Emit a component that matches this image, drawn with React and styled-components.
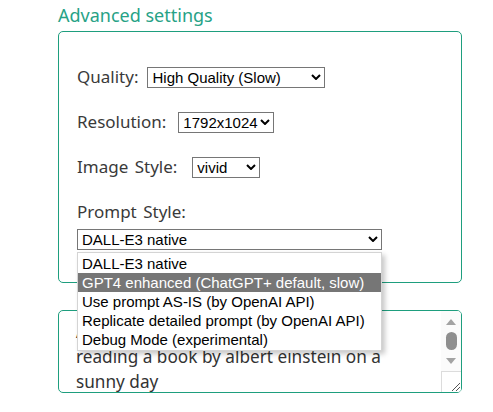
import React from "react";
import styled, { createGlobalStyle } from "styled-components";

const GlobalStyle = createGlobalStyle`
  html, body {
    margin: 0;
    padding: 0;
    background: #ffffff;
  }
  body {
    font-family: "Noto Sans", Inter, sans-serif;
  }
`;

const Page = styled.div`
  padding: 4px 0 0 58px;
  width: 404px;
`;

const Title = styled.h3`
  margin: 0 0 5px;
  font-size: 18px;
  line-height: 22px;
  font-weight: 400;
  color: #27a286;
`;

const Panel = styled.div`
  border: 1px solid #1e9e7e;
  border-radius: 5px;
  padding: 34px 18px 33px;
  display: flex;
  flex-direction: column;
  gap: 24px;
`;

const Row = styled.div`
  display: flex;
  align-items: center;
  height: 21px;
  gap: ${(p) => p.gap || 9}px;
`;

const Stack = styled.div`
  display: flex;
  flex-direction: column;
  gap: 6px;
`;

const Label = styled.label`
  font-size: 17px;
  line-height: 21px;
  word-spacing: 2px;
  color: #3a3a3a;
  white-space: nowrap;
`;

const SelectWrap = styled.div`
  position: relative;
  width: ${(p) => p.width}px;
  height: 21px;
`;

const NativeSelect = styled.select`
  appearance: none;
  -webkit-appearance: none;
  box-sizing: border-box;
  width: 100%;
  height: 100%;
  margin: 0;
  padding: 0 14px 0 4px;
  border: 1px solid #767676;
  border-radius: 0;
  background: #ffffff;
  font-family: "Liberation Sans", Arial, sans-serif;
  font-size: 15px;
  color: #000000;
  outline: none;
`;

const Chevron = styled.svg`
  position: absolute;
  right: 4px;
  top: 8px;
  pointer-events: none;
`;

const Dropdown = styled.ul`
  position: absolute;
  left: 0;
  top: 24px;
  box-sizing: border-box;
  width: 100%;
  margin: 0;
  padding: 1px 0;
  list-style: none;
  background: #ffffff;
  border: 1px solid #d4d4d4;
  box-shadow: 3px 3px 5px rgba(0, 0, 0, 0.22);
  z-index: 5;
`;

const Option = styled.li`
  height: 19px;
  line-height: 19px;
  padding-left: 4px;
  font-family: "Liberation Sans", Arial, sans-serif;
  font-size: 15px;
  white-space: nowrap;
  color: ${(p) => (p.active ? "#ffffff" : "#000000")};
  background: ${(p) => (p.active ? "#767676" : "transparent")};
`;

const PromptBox = styled.div`
  margin-top: 27px;
  height: 81px;
  border: 1px solid #1e9e7e;
  border-radius: 5px;
  display: flex;
  overflow: hidden;
`;

const PromptText = styled.textarea`
  flex: 1;
  border: none;
  outline: none;
  resize: none;
  overflow: hidden;
  margin: 0;
  padding: 8px 10px 0 17px;
  font-family: "Noto Sans", Inter, sans-serif;
  font-size: 17.2px;
  line-height: 25px;
  color: #333333;
  background: transparent;
`;

const Scrollbar = styled.div`
  width: 20px;
  display: flex;
  flex-direction: column;
  align-items: center;
  background: #fbfbfb;
`;

const Arrow = styled.div`
  width: 0;
  height: 0;
  margin-top: 8px;
  border-left: 5px solid transparent;
  border-right: 5px solid transparent;
  ${(p) =>
    p.down
      ? "border-top: 6px solid #a3a3a3;"
      : "border-bottom: 6px solid #a3a3a3;"}
`;

const Thumb = styled.div`
  width: 11px;
  height: 18px;
  margin-top: 7px;
  border-radius: 6px;
  background: #8f8f8f;
`;

const Corner = styled.div`
  margin-top: auto;
  box-sizing: border-box;
  width: 20px;
  height: 21px;
  border-top: 1px solid #dcdcdc;
  border-left: 1px solid #dcdcdc;
  background: #ffffff;
  display: flex;
  align-items: flex-end;
  justify-content: flex-end;
`;

const Select = ({ width, value, options, children }) => (
  <SelectWrap width={width}>
    <NativeSelect defaultValue={value}>
      {options.map((o) => (
        <option key={o}>{o}</option>
      ))}
    </NativeSelect>
    <Chevron width="10" height="6" viewBox="0 0 10 6">
      <path d="M1 1 L5 5 L9 1" fill="none" stroke="#000" strokeWidth="2" />
    </Chevron>
    {children}
  </SelectWrap>
);

const promptStyles = [
  "DALL-E3 native",
  "GPT4 enhanced (ChatGPT+ default, slow)",
  "Use prompt AS-IS (by OpenAI API)",
  "Replicate detailed prompt (by OpenAI API)",
  "Debug Mode (experimental)",
];

export default function App() {
  return (
    <>
      <GlobalStyle />
      <Page>
        <Title>Advanced settings</Title>
        <Panel>
          <Row>
            <Label>Quality:</Label>
            <Select
              width={178}
              value="High Quality (Slow)"
              options={["Standard (Fast)", "High Quality (Slow)"]}
            />
          </Row>
          <Row gap={12}>
            <Label>Resolution:</Label>
            <Select
              width={96}
              value="1792x1024"
              options={["1024x1024", "1792x1024", "1024x1792"]}
            />
          </Row>
          <Row gap={15}>
            <Label>Image Style:</Label>
            <Select width={68} value="vivid" options={["vivid", "natural"]} />
          </Row>
          <Stack>
            <Label>Prompt Style:</Label>
            <Select width={305} value="DALL-E3 native" options={promptStyles}>
              <Dropdown>
                {promptStyles.map((o, i) => (
                  <Option key={o} active={i === 1}>
                    {o}
                  </Option>
                ))}
              </Dropdown>
            </Select>
          </Stack>
        </Panel>
        <PromptBox>
          <PromptText
            readOnly
            defaultValue={
              "A cute cat wearing glasses\nreading a book by albert einstein on a\nsunny day"
            }
          />
          <Scrollbar>
            <Arrow />
            <Thumb />
            <Arrow down />
            <Corner>
              <svg width="12" height="12" viewBox="0 0 12 12">
                <path d="M3 11 L11 3 M7 11 L11 7" stroke="#555" strokeWidth="1" />
              </svg>
            </Corner>
          </Scrollbar>
        </PromptBox>
      </Page>
    </>
  );
}
